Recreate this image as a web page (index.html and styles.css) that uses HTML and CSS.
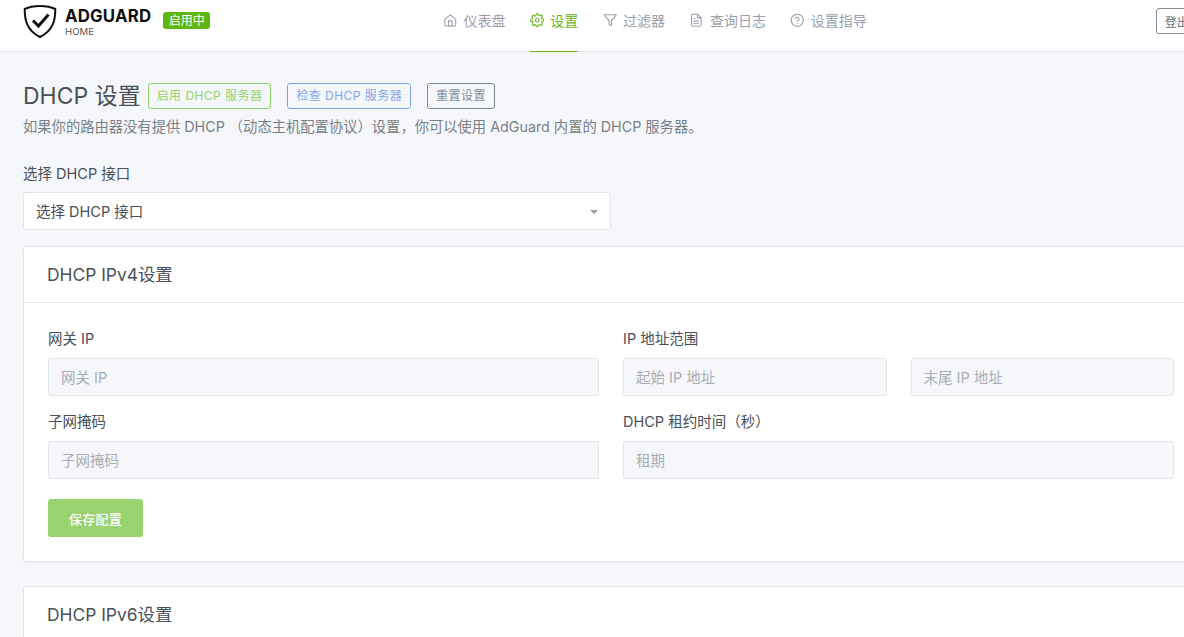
FILE: index.html
```html
<!DOCTYPE html>
<html lang="zh-CN">
<head>
<meta charset="utf-8">
<title>AdGuard Home</title>
<link rel="stylesheet" href="styles.css">
</head>
<body>
<div class="page">
<header class="header">
  <div class="brand">
    <svg class="shield" viewBox="0 0 36 36" width="36" height="36" aria-hidden="true">
      <path d="M18 3C12 3 6.500 4.200 2.700 6C2.700 16 4 27 18 34C32 27 33.300 16 33.300 6C29.500 4.200 24 3 18 3Z" fill="none" stroke="#111" stroke-width="2" stroke-linejoin="round"/>
      <path d="M11 17.500L16.500 23L26.500 11.500" fill="none" stroke="#111" stroke-width="3"/>
    </svg>
    <div class="wordmark"><span class="word-main">ADGUARD</span><span class="word-sub">HOME</span></div>
    <span class="status">启用中</span>
  </div>
  <nav class="nav">
    <a class="nav-item">
      <svg class="icon" viewBox="0 0 24 24"><path d="M3 10.500L12 3l9 7.500V20a1.500 1.500 0 0 1-1.500 1.500h-15A1.500 1.500 0 0 1 3 20z"/><path d="M9 21.500V13h6v8.500"/></svg>仪表盘
    </a>
    <a class="nav-item active">
      <svg class="icon" viewBox="0 0 24 24"><circle cx="12" cy="12" r="3"/><path d="M19.400 15a1.650 1.650 0 0 0 .33 1.820l.06.06a2 2 0 1 1-2.830 2.830l-.06-.06a1.650 1.650 0 0 0-2.820 1.170V21a2 2 0 1 1-4 0v-.09a1.650 1.650 0 0 0-2.820-1.110l-.06.06a2 2 0 1 1-2.830-2.830l.06-.06A1.650 1.650 0 0 0 3.090 14H3a2 2 0 1 1 0-4h.09a1.650 1.650 0 0 0 1.110-2.820l-.06-.06a2 2 0 1 1 2.830-2.830l.06.06A1.650 1.650 0 0 0 10 3.090V3a2 2 0 1 1 4 0v.09a1.650 1.650 0 0 0 2.820 1.110l.06-.06a2 2 0 1 1 2.830 2.830l-.06.06A1.650 1.650 0 0 0 20.910 10H21a2 2 0 1 1 0 4h-.09a1.650 1.650 0 0 0-1.510 1z"/></svg>设置
    </a>
    <a class="nav-item">
      <svg class="icon" viewBox="0 0 24 24"><path d="M22 3H2l8 9.460V19l4 2v-8.540z"/></svg>过滤器
    </a>
    <a class="nav-item">
      <svg class="icon" viewBox="0 0 24 24"><path d="M14 2H6a2 2 0 0 0-2 2v16a2 2 0 0 0 2 2h12a2 2 0 0 0 2-2V8z"/><path d="M14 2v6h6M16 13H8M16 17H8M10 9H8"/></svg>查询日志
    </a>
    <a class="nav-item">
      <svg class="icon" viewBox="0 0 24 24"><circle cx="12" cy="12" r="10"/><path d="M9.090 9a3 3 0 0 1 5.830 1c0 2-3 3-3 3M12 17h.01"/></svg>设置指导
    </a>
  </nav>
  <button class="logout">登出</button>
</header>

<main class="main">
  <div class="title-row">
    <h1 class="title">DHCP 设置</h1>
    <button class="btn btn-green">启用 DHCP 服务器</button>
    <button class="btn btn-blue">检查 DHCP 服务器</button>
    <button class="btn btn-grey">重置设置</button>
  </div>
  <p class="subtitle">如果你的路由器没有提供 DHCP （动态主机配置协议）设置，你可以使用 AdGuard 内置的 DHCP 服务器。</p>

  <div class="interface">
    <label class="label">选择 DHCP 接口</label>
    <div class="select">选择 DHCP 接口<span class="caret"></span></div>
  </div>

  <section class="card">
    <h2 class="card-title">DHCP IPv4设置</h2>
    <div class="card-body">
      <div class="grid">
        <div class="field">
          <label class="label">网关 IP</label>
          <div class="input">网关 IP</div>
        </div>
        <div class="field">
          <label class="label">IP 地址范围</label>
          <div class="pair">
            <div class="input">起始 IP 地址</div>
            <div class="input">末尾 IP 地址</div>
          </div>
        </div>
        <div class="field">
          <label class="label">子网掩码</label>
          <div class="input">子网掩码</div>
        </div>
        <div class="field">
          <label class="label">DHCP 租约时间（秒）</label>
          <div class="input">租期</div>
        </div>
      </div>
      <button class="save">保存配置</button>
    </div>
  </section>

  <section class="card">
    <h2 class="card-title">DHCP IPv6设置</h2>
  </section>
</main>
</div>
</body>
</html>
```
FILE: styles.css
```css
* { box-sizing: border-box; }
html, body {
  margin: 0;
  height: 637px;
  overflow: hidden;
  background: #f5f7fb;
}
body {
  font-family: Inter, "Noto Sans CJK SC", sans-serif;
  font-size: 14px;
  color: #495057;
}
.page { width: 1240px; }

.header {
  height: 52px;
  background: #fff;
  border-bottom: 1px solid #e3e7ef;
  display: flex;
  padding-left: 22px;
}
.brand { display: flex; align-items: flex-start; width: 421px; padding-top: 3px; }
.shield { display: block; flex: none; margin-right: 7px; }
.wordmark { display: flex; flex-direction: column; }
.word-main { font-size: 16.8px; line-height: 18px; font-weight: 700; color: #111; letter-spacing: .2px; margin-top: 4px; }
.word-sub { font-size: 9.5px; line-height: 11px; color: #555; margin-top: 1px; letter-spacing: .1px; }
.status {
  margin: 9px 0 0 12px;
  width: 47px;
  height: 17px;
  background: #5eb70b;
  color: #fff;
  font-size: 12px;
  line-height: 17px;
  border-radius: 3px;
  text-align: center;
}
.nav { display: flex; gap: 24.3px; }
.nav-item {
  display: flex;
  align-items: center;
  gap: 6px;
  height: 52px;
  padding-bottom: 11px;
  font-size: 14px;
  color: #9aa0ac;
  border-bottom: 1px solid transparent;
}
.nav-item.active { color: #66b41f; border-bottom-color: #66b41f; }
.icon {
  flex: none;
  width: 14.5px;
  height: 14.5px;
  fill: none;
  stroke: currentColor;
  stroke-width: 1.8;
  stroke-linecap: round;
  stroke-linejoin: round;
}
.logout {
  margin: 8px 0 0 289px;
  width: 55px;
  height: 26px;
  padding: 0 0 0 8px;
  text-align: left;
  background: #fff;
  border: 1px solid #868e96;
  border-radius: 3px;
  font: 12px Inter, "Noto Sans CJK SC", sans-serif;
  color: #6e757d;
}

.main { padding: 31px 0 0 23px; width: 1199px; }
.title-row { display: flex; align-items: center; height: 26px; }
.title {
  margin: 0 7px 0 0;
  font-size: 23px;
  font-weight: 400;
  line-height: 26px;
  color: #495057;
}
.btn {
  height: 26px;
  padding: 0 8px;
  margin-right: 16px;
  background: transparent;
  border: 1px solid;
  border-radius: 3px;
  font: 12px/24px Inter, "Noto Sans CJK SC", sans-serif;
  letter-spacing: .45px;
}
.btn-green { color: #8fd36f; border-color: #8cd46a; }
.btn-blue { color: #7da9e4; border-color: #79a6e2; }
.btn-grey { color: #868e96; border-color: #7e868e; }
.subtitle {
  margin: 8px 0 0;
  font-size: 14.3px;
  line-height: 20px;
  color: #7a8087;
}

.interface { margin-top: 28px; width: 588px; }
.label {
  display: block;
  font-size: 14.5px;
  line-height: 17px;
  color: #495057;
  margin-bottom: 10px;
}
.select {
  position: relative;
  height: 38px;
  padding: 0 12px;
  background: #fff;
  border: 1px solid #e1e5ec;
  border-radius: 3px;
  line-height: 38px;
  font-size: 14.5px;
  color: #495057;
}
.caret {
  position: absolute;
  right: 12px;
  top: 17px;
  border: 4px solid transparent;
  border-top: 4px solid #999;
  border-bottom: 0;
}

.card {
  background: #fff;
  border: 1px solid #e1e5ec;
  border-radius: 3px;
  box-shadow: 0 1px 2px rgba(0, 0, 0, .05);
  margin-top: 16px;
  margin-bottom: 24px;
}
.card-title {
  margin: 0;
  height: 56px;
  padding: 0 23px;
  border-bottom: 1px solid #e4e7ed;
  font-size: 17.4px;
  font-weight: 400;
  line-height: 55px;
  color: #495057;
}
.card-body { padding: 27px 24px 24px; height: 258px; }
.grid { display: grid; grid-template-columns: 1fr 1fr; gap: 17px 24px; }
.pair { display: grid; grid-template-columns: 1fr 1fr; gap: 24px; }
.field .label { margin-bottom: 11px; }
.input {
  height: 38px;
  padding: 0 12px;
  background: #f5f7fb;
  border: 1px solid #e1e5ec;
  border-radius: 3px;
  line-height: 37px;
  font-size: 14.5px;
  color: #a8adb3;
}
.save {
  display: block;
  margin-top: 20px;
  width: 95px;
  height: 38px;
  padding: 0;
  background: #99d36f;
  border: 0;
  border-radius: 3px;
  color: #fff;
  font: 500 13px Inter, "Noto Sans CJK SC", sans-serif;
  letter-spacing: .3px;
}
```
